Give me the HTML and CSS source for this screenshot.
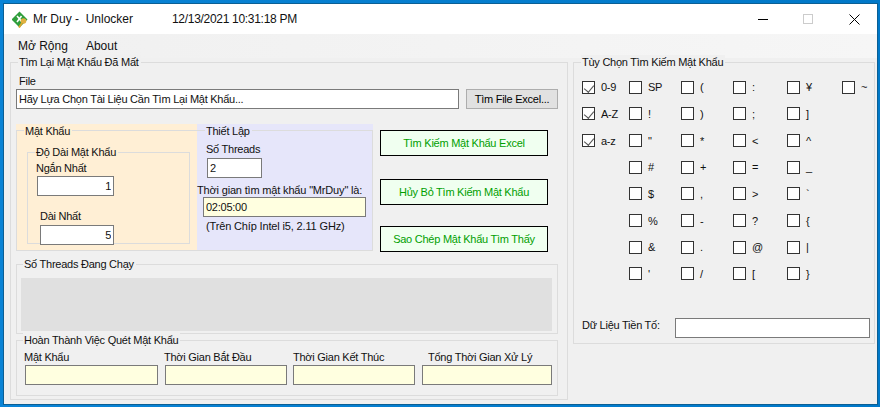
FILE: index.html
```html
<!DOCTYPE html>
<html lang="vi">
    <head>
        <meta charset="UTF-8">
        <title>Mr Duy - Unlocker</title>
        <link rel="stylesheet" href="styles.css">
    </head>
    <body>
        <div class="window">
            <header class="titlebar">
                <svg class="app-icon" width="17" height="17" viewBox="0 0 17 17">
                    <path d="M7.5 .5 15.5 8.5 7.5 16.5 -.5 8.5Z" fill="#2f9e3c"/>
                    <path d="M5 5 10 11M9.5 5 5 11" stroke="#fff" stroke-width="1.6"/>
                    <circle cx="11.5" cy="10" r="2.8" fill="#e0b040"/>
                    <path d="M10 12 7 16.5" stroke="#d9a52e" stroke-width="2"/>
                </svg>
                <span class="app-name">Mr Duy -&nbsp; Unlocker</span>
                <span class="app-date">12/13/2021 10:31:18 PM</span>
                <div class="window-btns">
                    <span class="btn-min"></span>
                    <span class="btn-max"></span>
                    <svg class="btn-close" width="11" height="11" viewBox="0 0 11 11">
                        <path d="M.5 .5 10.5 10.5M10.5 .5 .5 10.5" stroke="#000" fill="none"/>
                    </svg>
                </div>
            </header>

            <nav class="menubar">
                <span>Mở Rộng</span>
                <span>About</span>
            </nav>

            <main class="content">
                <section class="group group-main">
                    <span class="legend">Tìm Lại Mật Khẩu Đã Mất</span>
                    <label class="file-label">File</label>
                    <div class="file-row">
                        <input class="box file-input" value="Hãy Lựa Chọn Tài Liệu Cần Tìm Lại Mật Khẩu...">
                        <button class="file-btn">Tìm File Excel...</button>
                    </div>

                    <div class="middle">
                        <div class="panel panel-orange">
                            <div class="group group-pass">
                                <span class="legend">Mật Khẩu</span>
                                <div class="group group-length">
                                    <span class="legend">Độ Dài Mật Khẩu</span>
                                    <label class="short-label">Ngắn Nhất</label>
                                    <input class="box num short-input" value="1">
                                    <label class="long-label">Dài Nhất</label>
                                    <input class="box num long-input" value="5">
                                </div>
                            </div>
                        </div>
                        <div class="panel panel-blue">
                            <div class="group group-setup">
                                <span class="legend">Thiết Lập</span>
                                <label class="threads-label">Số Threads</label>
                                <input class="box threads-input" value="2">
                                <label class="time-label">Thời gian tìm mật khẩu "MrDuy" là:</label>
                                <input class="box yellow time-input" value="02:05:00">
                                <label class="chip-label">(Trên Chíp Intel i5, 2.11 GHz)</label>
                            </div>
                        </div>
                        <div class="actions">
                            <button class="action">Tìm Kiếm Mật Khẩu Excel</button>
                            <button class="action">Hủy Bỏ Tìm Kiếm Mật Khẩu</button>
                            <button class="action">Sao Chép Mật Khẩu Tìm Thấy</button>
                        </div>
                    </div>

                    <div class="group group-running">
                        <span class="legend">Số Threads Đang Chạy</span>
                        <div class="thread-list"></div>
                    </div>

                    <div class="group group-done">
                        <span class="legend">Hoàn Thành Việc Quét Mật Khẩu</span>
                        <div class="done-grid">
                            <label>Mật Khẩu</label>
                            <label>Thời Gian Bắt Đầu</label>
                            <label>Thời Gian Kết Thúc</label>
                            <label>Tổng Thời Gian Xử Lý</label>
                            <input class="box yellow">
                            <input class="box yellow">
                            <input class="box yellow">
                            <input class="box yellow">
                        </div>
                    </div>
                </section>

                <section class="group group-options">
                    <span class="legend">Tùy Chọn Tìm Kiếm Mật Khẩu</span>
                    <div class="options">
                        <div class="col col-1">
                            <label class="opt"><input type="checkbox" checked>0-9</label>
                            <label class="opt"><input type="checkbox" checked>A-Z</label>
                            <label class="opt"><input type="checkbox" checked>a-z</label>
                        </div>
                        <div class="col col-2">
                            <label class="opt"><input type="checkbox">SP</label>
                            <label class="opt"><input type="checkbox">!</label>
                            <label class="opt"><input type="checkbox">"</label>
                            <label class="opt"><input type="checkbox">#</label>
                            <label class="opt"><input type="checkbox">$</label>
                            <label class="opt"><input type="checkbox">%</label>
                            <label class="opt"><input type="checkbox">&amp;</label>
                            <label class="opt"><input type="checkbox">'</label>
                        </div>
                        <div class="col col-3">
                            <label class="opt"><input type="checkbox">(</label>
                            <label class="opt"><input type="checkbox">)</label>
                            <label class="opt"><input type="checkbox">*</label>
                            <label class="opt"><input type="checkbox">+</label>
                            <label class="opt"><input type="checkbox">,</label>
                            <label class="opt"><input type="checkbox">-</label>
                            <label class="opt"><input type="checkbox">.</label>
                            <label class="opt"><input type="checkbox">/</label>
                        </div>
                        <div class="col col-4">
                            <label class="opt"><input type="checkbox">:</label>
                            <label class="opt"><input type="checkbox">;</label>
                            <label class="opt"><input type="checkbox">&lt;</label>
                            <label class="opt"><input type="checkbox">=</label>
                            <label class="opt"><input type="checkbox">&gt;</label>
                            <label class="opt"><input type="checkbox">?</label>
                            <label class="opt"><input type="checkbox">@</label>
                            <label class="opt"><input type="checkbox">[</label>
                        </div>
                        <div class="col col-5">
                            <label class="opt"><input type="checkbox">¥</label>
                            <label class="opt"><input type="checkbox">]</label>
                            <label class="opt"><input type="checkbox">^</label>
                            <label class="opt"><input type="checkbox">_</label>
                            <label class="opt"><input type="checkbox">`</label>
                            <label class="opt"><input type="checkbox">{</label>
                            <label class="opt"><input type="checkbox">|</label>
                            <label class="opt"><input type="checkbox">}</label>
                        </div>
                        <div class="col col-6">
                            <label class="opt"><input type="checkbox">~</label>
                        </div>
                    </div>
                    <div class="prefix-row">
                        <label>Dữ Liệu Tiền Tố:</label>
                        <input class="box prefix-input">
                    </div>
                </section>
            </main>
        </div>
    </body>
</html>
```
FILE: styles.css
```css
*{
    font-family: "Liberation Sans", Arial, sans-serif;
    font-size: 11px;
    letter-spacing: -.25px;
    box-sizing: border-box;
}

body{
    margin: 0;
    width: 880px;
    height: 407px;
    overflow: hidden;
    padding: 4px 3px 3px 4px;
    background: linear-gradient(90deg, #0a84d6, #0078c8);
    color: #111;
}

label{
    display: block;
    line-height: 14px;
}

.window{
    height: 400px;
    background: #f0f0f0;
    display: flex;
    flex-direction: column;
    box-shadow: 0 0 0 1px #0b5f94;
}

/* title bar */
.titlebar{
    height: 30px;
    flex: none;
    background: #fff;
    display: flex;
    align-items: center;
    padding-left: 8px;
}
.app-icon{
    flex: none;
}
.app-name{
    margin-left: 4px;
    width: 139px;
    font-size: 12px;
    letter-spacing: 0;
}
.app-date{
    font-size: 12px;
    letter-spacing: -.3px;
}
.window-btns{
    margin-left: auto;
    display: flex;
    align-items: center;
    padding-right: 17px;
}
.btn-min{
    width: 10px;
    height: 1px;
    background: #000;
}
.btn-max{
    width: 10px;
    height: 10px;
    margin-left: 35px;
    border: 1px solid #ccc;
}
.btn-close{
    margin-left: 36px;
}

/* menu */
.menubar{
    height: 24px;
    flex: none;
    display: flex;
    align-items: center;
    gap: 18px;
    padding: 0 0 0 14px;
    background: linear-gradient(90deg, #f0f0f0, #f6f6f6);
}
.menubar span{
    font-size: 12px;
    letter-spacing: 0;
}

.content{
    display: flex;
    gap: 5px;
    padding: 4px 2px 0 6px;
}

/* groups */
.group{
    border: 1px solid #dcdcdc;
}
.legend{
    display: block;
    width: fit-content;
    height: 14px;
    line-height: 14px;
    margin: -8px 0 0 -1px;
    padding: 0 2px 0 1px;
    background: #f0f0f0;
}
.box{
    display: block;
    height: 20px;
    border: 1px solid #7a7a7a;
    background: #fff;
    padding: 0 2px;
    margin: 0;
    outline: none;
    color: #111;
}
.yellow{
    background: #ffffe0;
}
.num{
    text-align: right;
}

.group-main{
    width: 558px;
    height: 338px;
    padding: 0 0 0 5px;
}
.group-main > .legend{
    margin-left: 2px;
}
.file-label{
    margin: 5px 0 0 3px;
}
.file-row{
    display: flex;
    margin-top: 1px;
}
.file-input{
    width: 443px;
}
.file-btn{
    width: 92px;
    height: 20px;
    margin-left: 7px;
    border: 1px solid #adadad;
    background: #e1e1e1;
    padding: 0;
}

.middle{
    display: flex;
    height: 127px;
    margin-top: 15px;
}
.panel{
    height: 127px;
    padding-top: 6px;
}
.panel-orange{
    width: 181px;
    background: #ffefd5;
}
.panel-blue{
    width: 176px;
    background: #e6e6fa;
}
.panel .group{
    height: 121px;
}
.panel-orange .legend{
    background: #ffefd5;
}
.panel-blue .legend{
    background: #e6e6fa;
}
.group-pass{
    border-right: none;
    padding-left: 10px;
}
.group-pass > .legend{
    margin: -7px 0 0 -3px;
}
.panel .group-length{
    width: 163px;
    height: 92px;
    margin-top: 14px;
    padding-left: 8px;
}
.short-label{
    margin-top: 2px;
}
.short-input{
    width: 77px;
    margin: 1px 0 0 1px;
}
.long-label{
    margin: 13px 0 0 4px;
}
.long-input{
    width: 74px;
    margin: 2px 0 0 4px;
}
.group-setup{
    border-left: none;
    padding-left: 9px;
}
.group-setup > .legend{
    margin-top: -7px;
}
.threads-label{
    margin-top: 4px;
}
.threads-input{
    width: 55px;
    margin: 2px 0 0 1px;
}
.time-label{
    margin: 5px 0 0 -9px;
    white-space: nowrap;
    letter-spacing: -.17px;
}
.time-input{
    width: 163px;
    margin: 0 0 0 -3px;
}
.chip-label{
    margin-top: 2px;
    letter-spacing: -.15px;
}

.actions{
    margin-left: 7px;
    padding-top: 6px;
    display: flex;
    flex-direction: column;
}
.action{
    width: 168px;
    height: 26px;
    flex: none;
    padding: 0;
    border: 1px solid #000;
    background: #f0fff0;
    color: #00a000;
}
.action + .action{
    margin-top: 23px;
}
.action:last-child{
    margin-top: 21px;
}

.group-running{
    width: 542px;
    height: 70px;
    margin-top: 13px;
    padding-left: 4px;
}
.group-running .legend{
    margin-left: 2px;
}
.thread-list{
    width: 531px;
    height: 53px;
    margin-top: 7px;
    background: #e0e0e0;
}
.group-done{
    width: 542px;
    height: 56px;
    margin-top: 6px;
    padding-left: 8px;
}
.group-done .legend{
    margin-left: -2px;
}
.done-grid{
    display: grid;
    grid-template-columns: 140px 128px 129px 130px;
    row-gap: 1px;
    margin-top: 3px;
}
.done-grid label:nth-child(1),
.done-grid label:nth-child(2){
    margin-left: -1px;
}
.done-grid label:nth-child(4){
    margin-left: 6px;
}
.done-grid input{
    width: 122px;
}
.done-grid input:nth-child(5){
    width: 133px;
}
.done-grid input:nth-child(8){
    width: 130px;
}

/* options */
.group-options{
    width: 302px;
    height: 282px;
    padding-left: 8px;
}
.options{
    display: flex;
    height: 216px;
    margin-top: 5px;
}
.col{
    flex: none;
    display: flex;
    flex-direction: column;
}
.col-1{ width: 47px; }
.col-2{ width: 52px; }
.col-3{ width: 52px; }
.col-4{ width: 54px; }
.col-5{ width: 55px; }
.opt{
    display: flex;
    align-items: center;
    height: 26.66px;
    white-space: nowrap;
}
.opt input{
    appearance: none;
    position: relative;
    width: 13px;
    height: 13px;
    margin: 0 6px 0 0;
    border: 1px solid #333;
    background: #fff;
    flex: none;
}
.opt input:checked::after{
    content: '';
    position: absolute;
    left: 3px;
    top: 1px;
    width: 5px;
    height: 8px;
    border: solid #555;
    border-width: 0 1px 1px 0;
    transform: rotate(40deg);
}
.prefix-row{
    display: flex;
    margin-top: 28px;
}
.prefix-row label{
    width: 93px;
}
.prefix-input{
    width: 195px;
}
```
